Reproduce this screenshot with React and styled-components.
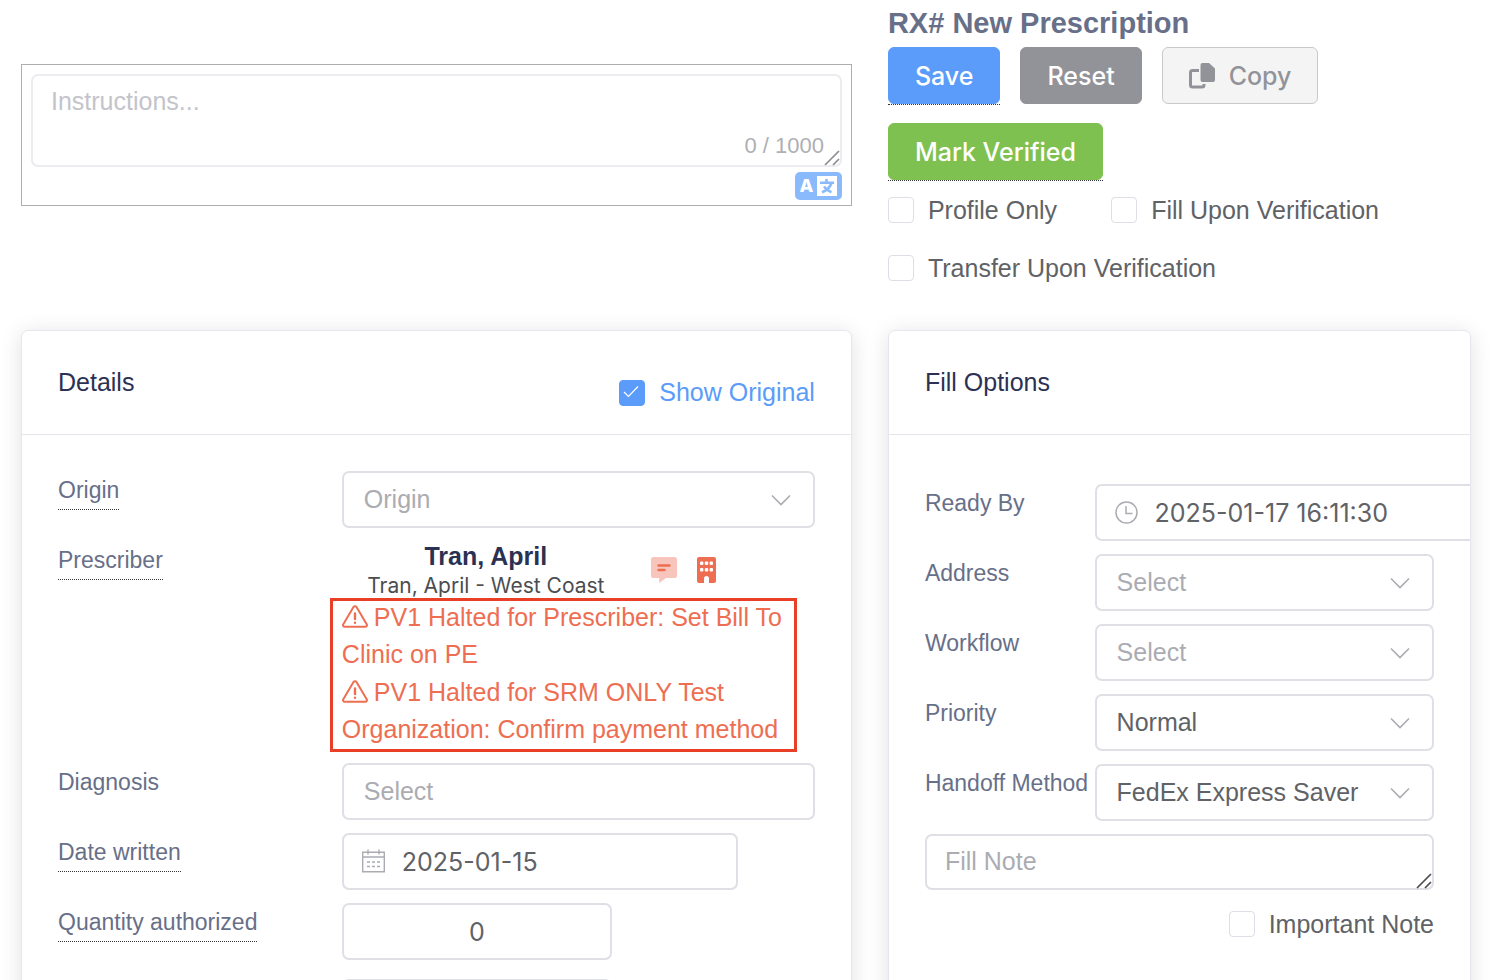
import React from "react";
import styled, { createGlobalStyle, css } from "styled-components";

const GlobalStyle = createGlobalStyle`
  * { box-sizing: border-box; }
  body {
    margin: 0;
    background: #fff;
    color: #606266;
    font-family: "Liberation Sans", Arial, sans-serif;
    font-size: 25px;
  }
  button, input, select, textarea { font: inherit; color: inherit; margin: 0; }
  svg { display: block; flex: none; }
`;

const uiFont = `Inter, "Liberation Sans", sans-serif`;

const Page = styled.main`
  height: 100vh;
  overflow-y: auto;
  scrollbar-width: none;
  padding: 0 19px 36px 21px;
  display: grid;
  grid-template-columns: minmax(0, 57fr) minmax(0, 40fr);
  grid-template-rows: max-content max-content;
  column-gap: 36px;
  row-gap: 32px;
`;

/* ---------- instructions ---------- */

const Instructions = styled.section`
  padding-top: 64px;
`;

const InstructionsFrame = styled.div`
  display: flex;
  flex-direction: column;
  align-items: flex-end;
  gap: 5px;
  padding: 9px 9px 5px;
  border: 1px solid #aeaeb0;
`;

const AreaWrap = styled.div`
  position: relative;
  width: 100%;
  display: flex;
`;

const Area = styled.textarea`
  display: block;
  width: 100%;
  height: ${(p) => (p.$tall ? 93 : 56)}px;
  padding: 6px 18px;
  border: 2px solid ${(p) => (p.$tall ? "#ebebf0" : "#dfdfe6")};
  border-radius: 7px;
  line-height: 38px;
  background: #fff;
  resize: none;
  overflow: hidden;
  outline: none;
  &::placeholder {
    color: ${(p) => (p.$tall ? "#c3c4ca" : "#abacb2")};
    opacity: 1;
  }
`;

const Counter = styled.span`
  position: absolute;
  right: 18px;
  bottom: 8px;
  font-size: 22px;
  line-height: 26px;
  color: #aeafb4;
`;

const Grip = styled.svg`
  position: absolute;
  right: 1px;
  bottom: 1px;
`;

const TranslateButton = styled.button`
  display: flex;
  align-items: center;
  justify-content: center;
  gap: 4px;
  width: 47px;
  height: 28px;
  padding: 0;
  border: 0;
  border-radius: 5px;
  background: #8abafc;
  color: #fff;
`;

const LatinMark = styled.span`
  width: 14px;
  font: 800 18px/20px ${uiFont};
`;

/* ---------- header ---------- */

const Title = styled.h1`
  margin: 0;
  font-size: 29px;
  line-height: 47px;
  font-weight: 700;
  color: #686f88;
`;

const Actions = styled.div`
  display: flex;
  flex-wrap: wrap;
  align-items: flex-start;
  gap: 18px 20px;
`;

const HintWrap = styled.span`
  display: inline-flex;
  border-bottom: 1px dotted #303133;
`;

const tones = {
  primary: css`background: #5b9bf9; border-color: #5b9bf9; color: #fff;`,
  info: css`background: #929398; border-color: #929398; color: #fff;`,
  success: css`background: #7fc151; border-color: #7fc151; color: #fff;`,
  plain: css`background: #f4f4f4; border-color: #c8c9cc; color: #929398;`,
};

const Button = styled.button`
  display: inline-flex;
  align-items: center;
  gap: 14px;
  height: 57px;
  padding: 0 26px;
  border: 1px solid;
  border-radius: 6px;
  font-family: ${uiFont};
  font-weight: 500;
  white-space: nowrap;
  ${(p) => tones[p.$tone]}
`;

const Flags = styled.div`
  display: flex;
  flex-wrap: wrap;
  column-gap: 54px;
  padding-bottom: 1px;
`;

const CheckLabel = styled.label`
  display: inline-flex;
  align-items: center;
  gap: 14px;
  line-height: ${(p) => p.$line || 58}px;
  color: ${(p) => (p.$active ? "#5b9bf9" : "#606266")};
  white-space: nowrap;
`;

const TickBox = styled.input`
  appearance: none;
  flex: none;
  width: 26px;
  height: 26px;
  border: 1px solid #dcdfe6;
  border-radius: 4px;
  background: #fff;
  &:checked {
    border-color: #5b9bf9;
    background: #5b9bf9
      url("data:image/svg+xml,%3Csvg xmlns='http://www.w3.org/2000/svg' viewBox='0 0 24 24'%3E%3Cpath d='M4 11l4.500 4.500L18 5.500' fill='none' stroke='white' stroke-width='1.200'/%3E%3C/svg%3E")
      center / 24px 24px no-repeat;
  }
`;

/* ---------- cards ---------- */

const Card = styled.section`
  border: 1px solid #e6e7ee;
  border-radius: 7px;
  background: #fff;
  box-shadow: 0 3px 22px rgba(0, 0, 0, 0.12);
  overflow: hidden;
`;

const CardHead = styled.header`
  display: flex;
  align-items: flex-start;
  justify-content: space-between;
  padding: 32px 36px 0;
  min-height: 104px;
  border-bottom: 1px solid #e6e7ee;
`;

const CardTitle = styled.h2`
  margin: 0;
  font-size: 25px;
  line-height: 39px;
  font-weight: 400;
  color: #2b3152;
`;

const HeadOption = styled.div`
  display: flex;
  padding-top: 10px;
`;

const Form = styled.form`
  display: flex;
  flex-direction: column;
  gap: 13px;
  padding: ${(p) => (p.$loose ? 49 : 36)}px 36px 36px;
`;

const Row = styled.div`
  display: grid;
  grid-template-columns: ${(p) => p.$cols};
  align-items: start;
  min-height: ${(p) => p.$min || 57}px;
`;

const FieldLabel = styled.label`
  justify-self: start;
  font-size: 23px;
  line-height: 38px;
  color: #686f88;
  white-space: nowrap;
  ${(p) => p.$hint && css`border-bottom: 1px dotted #303133;`}
`;

const control = css`
  display: block;
  width: 100%;
  height: 57px;
  border: 2px solid #dfdfe6;
  border-radius: 7px;
  background: #fff;
  outline: none;
`;

const Control = styled.div`
  position: relative;
  min-width: 0;
  width: ${(p) => (p.$width ? p.$width + "px" : "100%")};
`;

const Select = styled.select`
  ${control}
  appearance: none;
  padding: 0 60px 1px 20px;
  color: ${(p) => (p.$empty ? "#abacb2" : "#606266")};
`;

const Input = styled.input`
  ${control}
  padding: 0 20px ${(p) => (p.$icon ? "0 58px" : "0 20px")};
  text-align: ${(p) => p.$align || "left"};
  font-family: ${(p) => (p.$numeric ? uiFont : "inherit")};
  &::placeholder { color: #abacb2; opacity: 1; }
`;

const Suffix = styled.span`
  position: absolute;
  right: 24px;
  top: 23px;
  pointer-events: none;
  color: #abacb2;
`;

const Prefix = styled.span`
  position: absolute;
  left: 20px;
  top: 16px;
  color: #abacb2;
`;

/* ---------- prescriber ---------- */

const Prescriber = styled.div`
  min-width: 0;
  margin-bottom: -2px;
`;

const PrescriberTop = styled.div`
  display: flex;
  align-items: flex-start;
`;

const PrescriberName = styled.div`
  width: 288px;
  text-align: center;
`;

const Name = styled.strong`
  display: block;
  line-height: 31px;
  color: #2b3152;
`;

const Practice = styled.span`
  display: block;
  font: 400 21px/28px ${uiFont};
  color: #4c4d50;
  white-space: nowrap;
`;

const IconButtons = styled.div`
  display: flex;
  gap: 20px;
  padding: 16px 0 0 21px;
`;

const IconButton = styled.button`
  padding: 0;
  border: 0;
  background: none;
`;

const Alerts = styled.div`
  display: flex;
  flex-direction: column;
  gap: 1px;
  margin: -2px 18px 0 -12px;
  padding: 1px 6px 4px 12px;
  box-shadow: inset 0 0 0 3px #ea3f27;
  color: #ee6e52;
`;

const Alert = styled.p`
  margin: 0;
  line-height: 37px;
  svg { display: inline-block; vertical-align: -2px; margin-right: 6px; }
`;

const NoteOption = styled.div`
  display: flex;
  justify-content: flex-end;
  margin-top: -8px;
`;

/* ---------- icons ---------- */

const HanMark = () => (
  <svg width="20" height="20" viewBox="0 0 20 20" fill="none" aria-hidden="true">
    <rect width="20" height="20" fill="#fff" />
    <path d="M9.500 3v3M3 6.800h14M14.500 7c-1.500 4.500-5 7.500-9.500 9.200M7 10.500c2 2.800 4.500 4.600 7.500 5.700" stroke="#8abafc" strokeWidth="2.600" />
  </svg>
);

const Chevron = () => (
  <svg width="20" height="12" viewBox="0 0 20 12" fill="none" stroke="currentColor" strokeWidth="1.6">
    <path d="M1 1.500L10 10.500L19 1.500" />
  </svg>
);

const GripLines = ({ color }) => (
  <Grip width="17" height="16" viewBox="0 0 17 16" stroke={color} strokeWidth="1.7" aria-hidden="true">
    <path d="M1 15L15 1M9 15L15 9" />
  </Grip>
);

const CopyIcon = () => (
  <svg width="26" height="26" viewBox="0 0 26 26" aria-hidden="true">
    <path d="M10 7.500H3.500a2 2 0 0 0-2 2V22a2 2 0 0 0 2 2H13a2 2 0 0 0 2-2v-1" fill="none" stroke="currentColor" strokeWidth="3" />
    <path d="M13.500 0H20l6 5.500V17a2 2 0 0 1-2 2H13.500a2 2 0 0 1-2-2V2a2 2 0 0 1 2-2z" fill="currentColor" />
  </svg>
);

const CalendarIcon = () => (
  <svg width="23" height="24" viewBox="0 0 23 24" fill="none" stroke="currentColor" strokeWidth="1.4">
    <path d="M.7 3.200H22.300V22.800H.7zM.7 8H22.300M6 .5v5M17 .5v5" />
    <path d="M5 13h3M10 13h3M15 13h3M5 17.500h3M10 17.500h3M15 17.500h3" />
  </svg>
);

const ClockIcon = () => (
  <svg width="23" height="24" viewBox="0 0 23 24" fill="none" stroke="currentColor" strokeWidth="1.5">
    <circle cx="11.500" cy="12.500" r="10.500" />
    <path d="M11 6v7.500h6.500" />
  </svg>
);

const MessageIcon = () => (
  <svg width="26" height="26" viewBox="0 0 26 26" aria-hidden="true">
    <path d="M2.500 0h21A2.500 2.500 0 0 1 26 2.500v16a2.500 2.500 0 0 1-2.500 2.500H15l-6.800 5V21H2.500A2.500 2.500 0 0 1 0 18.500v-16A2.500 2.500 0 0 1 2.500 0z" fill="#f7c5bb" />
    <path d="M7.500 8.500h11M7.500 13h6" stroke="#ee6e52" strokeWidth="2.400" strokeLinecap="round" />
  </svg>
);

const BuildingIcon = () => (
  <svg width="19" height="26" viewBox="0 0 19 26" aria-hidden="true">
    <path d="M2 0h15a2 2 0 0 1 2 2v22a2 2 0 0 1-2 2h-5v-4.500a2.500 2.500 0 0 0-5 0V26H2a2 2 0 0 1-2-2V2a2 2 0 0 1 2-2z" fill="#ee6e52" />
    {[3, 7.8, 12.6].map((x) =>
      [4.5, 11].map((y) => <rect key={`${x}-${y}`} x={x} y={y} width="3.400" height="3.400" rx="1" fill="#fff" />)
    )}
  </svg>
);

const WarningIcon = () => (
  <svg width="26" height="23" viewBox="0 0 26 23" fill="none" stroke="currentColor" strokeWidth="2" strokeLinejoin="round" strokeLinecap="round" aria-hidden="true">
    <path d="M11.500 2.100a1.700 1.700 0 0 1 3 0L24.700 19.200a1.700 1.700 0 0 1-1.500 2.600H2.800a1.700 1.700 0 0 1-1.500-2.600z" />
    <path d="M13 8.500v5.500M13 17.600v.2" strokeWidth="2.400" />
  </svg>
);

/* ---------- composed parts ---------- */

function Check({ label, checked, line }) {
  return (
    <CheckLabel $active={checked} $line={line}>
      <TickBox type="checkbox" defaultChecked={checked} />
      {label}
    </CheckLabel>
  );
}

function SelectField({ id, value, empty }) {
  return (
    <Control>
      <Select id={id} $empty={empty} defaultValue={value}>
        <option>{value}</option>
      </Select>
      <Suffix><Chevron /></Suffix>
    </Control>
  );
}

const DETAILS = "minmax(0, 3fr) minmax(0, 5fr)";
const FILL = "minmax(0, 1fr) minmax(0, 2fr)";

export default function App() {
  return (
    <>
      <GlobalStyle />
      <Page>
        <Instructions>
          <InstructionsFrame>
            <AreaWrap>
              <Area $tall placeholder="Instructions..." aria-label="Instructions" />
              <Counter>0 / 1000</Counter>
              <GripLines color="#8e8e90" />
            </AreaWrap>
            <TranslateButton type="button" aria-label="Translate">
              <LatinMark>A</LatinMark>
              <HanMark />
            </TranslateButton>
          </InstructionsFrame>
        </Instructions>

        <section>
          <Title>RX# New Prescription</Title>
          <Actions>
            <HintWrap><Button type="button" $tone="primary">Save</Button></HintWrap>
            <Button type="button" $tone="info">Reset</Button>
            <Button type="button" $tone="plain"><CopyIcon />Copy</Button>
            <HintWrap><Button type="button" $tone="success">Mark Verified</Button></HintWrap>
          </Actions>
          <Flags>
            <Check label="Profile Only" />
            <Check label="Fill Upon Verification" />
            <Check label="Transfer Upon Verification" />
          </Flags>
        </section>

        <Card>
          <CardHead>
            <CardTitle>Details</CardTitle>
            <HeadOption><Check label="Show Original" checked line={39} /></HeadOption>
          </CardHead>
          <Form>
            <Row $cols={DETAILS}>
              <FieldLabel $hint htmlFor="origin">Origin</FieldLabel>
              <SelectField id="origin" value="Origin" empty />
            </Row>
            <Row $cols={DETAILS}>
              <FieldLabel as="span" $hint>Prescriber</FieldLabel>
              <Prescriber>
                <PrescriberTop>
                  <PrescriberName>
                    <Name>Tran, April</Name>
                    <Practice>Tran, April - West Coast</Practice>
                  </PrescriberName>
                  <IconButtons>
                    <IconButton type="button" aria-label="Messages"><MessageIcon /></IconButton>
                    <IconButton type="button" aria-label="Organization"><BuildingIcon /></IconButton>
                  </IconButtons>
                </PrescriberTop>
                <Alerts role="alert">
                  <Alert><WarningIcon />PV1 Halted for Prescriber: Set Bill To Clinic on PE</Alert>
                  <Alert><WarningIcon />PV1 Halted for SRM ONLY Test Organization: Confirm payment method</Alert>
                </Alerts>
              </Prescriber>
            </Row>
            <Row $cols={DETAILS}>
              <FieldLabel htmlFor="diagnosis">Diagnosis</FieldLabel>
              <Control><Input id="diagnosis" placeholder="Select" /></Control>
            </Row>
            <Row $cols={DETAILS}>
              <FieldLabel $hint htmlFor="written">Date written</FieldLabel>
              <Control $width={396}>
                <Input id="written" $icon $numeric defaultValue="2025-01-15" />
                <Prefix><CalendarIcon /></Prefix>
              </Control>
            </Row>
            <Row $cols={DETAILS} $min={63}>
              <FieldLabel $hint htmlFor="quantity">Quantity authorized</FieldLabel>
              <Control $width={270}>
                <Input id="quantity" $numeric $align="center" defaultValue="0" />
              </Control>
            </Row>
            <Row $cols={DETAILS}>
              <span />
              <Control $width={270}>
                <Input aria-label="Quantity dispensed" $numeric $align="center" />
              </Control>
            </Row>
          </Form>
        </Card>

        <Card>
          <CardHead>
            <CardTitle>Fill Options</CardTitle>
          </CardHead>
          <Form $loose>
            <Row $cols={FILL}>
              <FieldLabel htmlFor="ready">Ready By</FieldLabel>
              <Control $width={396}>
                <Input id="ready" $icon $numeric defaultValue="2025-01-17 16:11:30" />
                <Prefix><ClockIcon /></Prefix>
              </Control>
            </Row>
            <Row $cols={FILL}>
              <FieldLabel htmlFor="address">Address</FieldLabel>
              <SelectField id="address" value="Select" empty />
            </Row>
            <Row $cols={FILL}>
              <FieldLabel htmlFor="workflow">Workflow</FieldLabel>
              <SelectField id="workflow" value="Select" empty />
            </Row>
            <Row $cols={FILL}>
              <FieldLabel htmlFor="priority">Priority</FieldLabel>
              <SelectField id="priority" value="Normal" />
            </Row>
            <Row $cols={FILL}>
              <FieldLabel htmlFor="handoff">Handoff Method</FieldLabel>
              <SelectField id="handoff" value="FedEx Express Saver" />
            </Row>
            <AreaWrap>
              <Area placeholder="Fill Note" aria-label="Fill Note" />
              <GripLines color="#4c4d50" />
            </AreaWrap>
            <NoteOption><Check label="Important Note" /></NoteOption>
          </Form>
        </Card>
      </Page>
    </>
  );
}
